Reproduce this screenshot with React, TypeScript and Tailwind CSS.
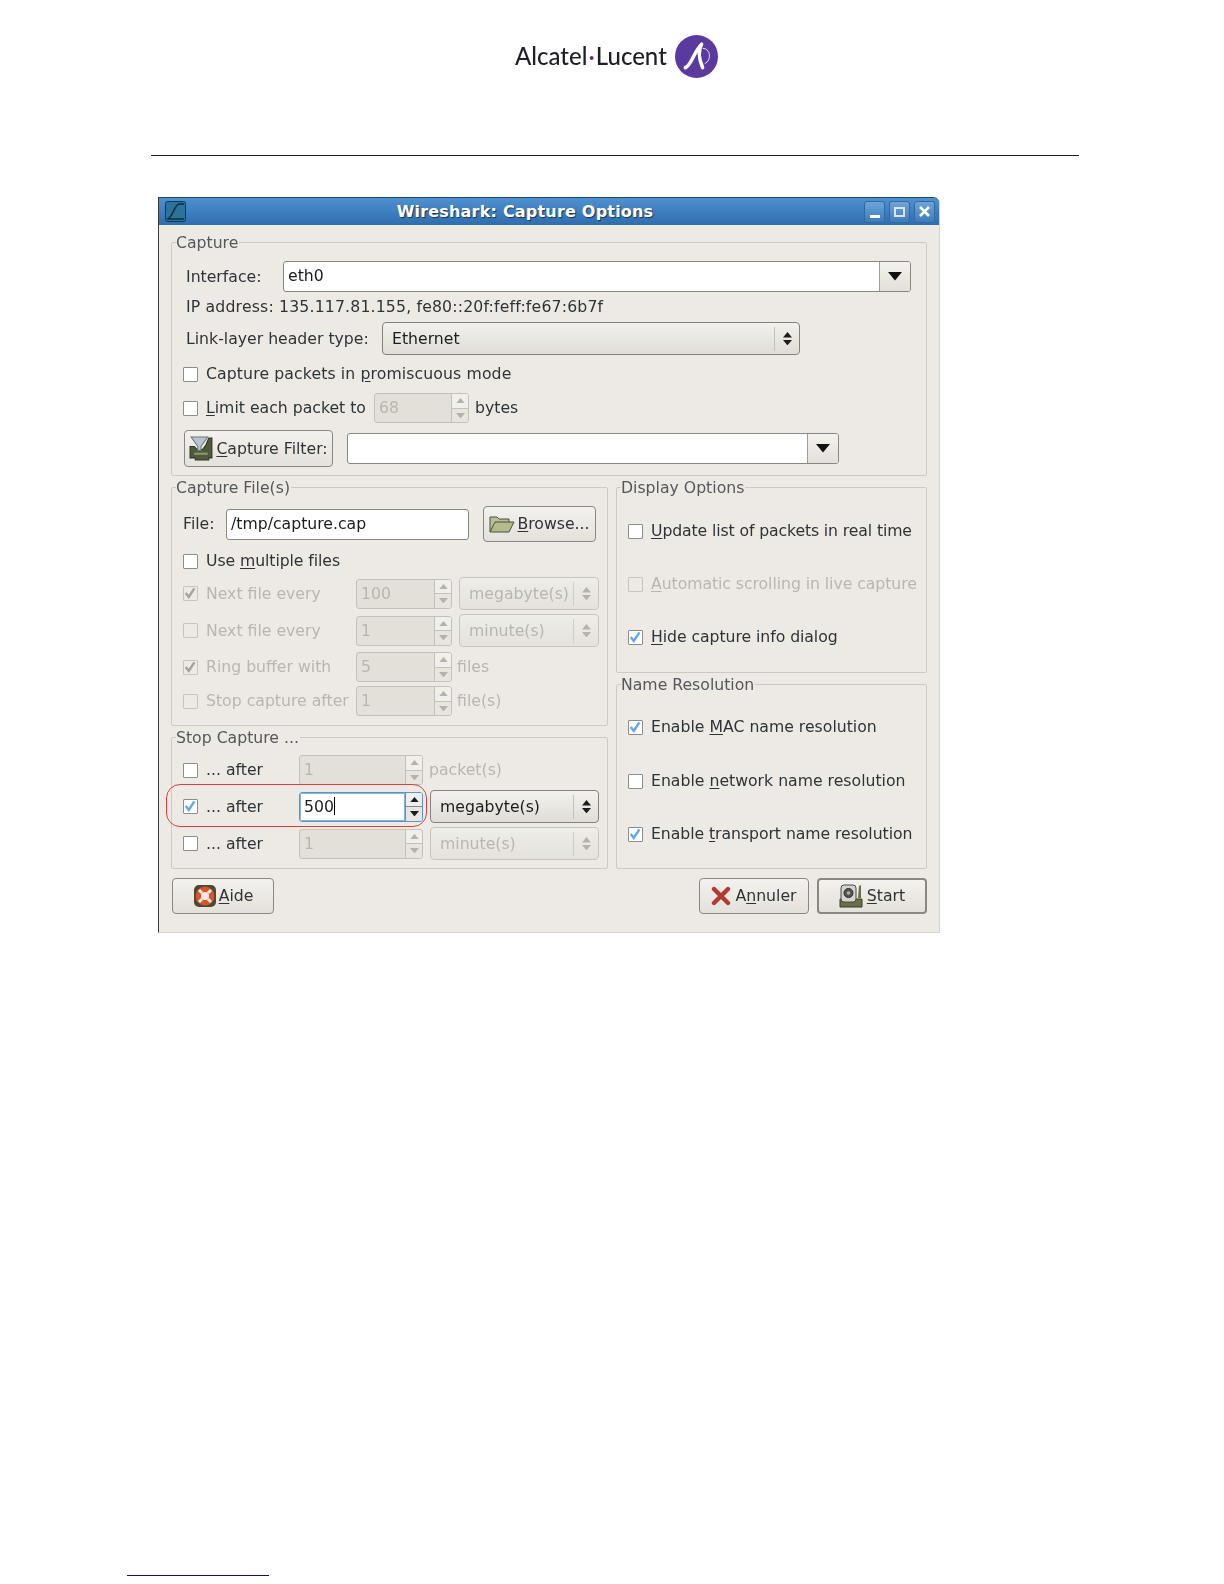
import type { ReactNode } from "react";

const ink = "text-[#2e3436]";
const off = "text-[#b9b6af]";

function Frame({ title, className, children }: { title: string; className: string; children: ReactNode }) {
  return (
    <fieldset className="border border-[#cdcac3] rounded-[2px]">
      <legend className="ml-[4px] pr-[1px] h-[20px] leading-[22px] text-[#55575a]">{title}</legend>
      <div className={className}>{children}</div>
    </fieldset>
  );
}

function Check({ on, disabled }: { on?: boolean; disabled?: boolean }) {
  const tone = disabled ? "border-[#c8c5be] bg-transparent" : "border-[#8f8d88] bg-white";
  return (
    <span className={`w-[15px] h-[15px] shrink-0 border rounded-[1px] ${tone}`}>
      {on && (
        <svg viewBox="0 0 15 15" className="w-[13px] h-[13px]">
          <path
            d="M2 7 L5.5 11.5 L12 1.5"
            fill="none"
            stroke={disabled ? "#a5a29b" : "#62a8e4"}
            strokeWidth="2.8"
          />
        </svg>
      )}
    </span>
  );
}

function CheckRow({ on, disabled, className, children }: { on?: boolean; disabled?: boolean; className: string; children: ReactNode }) {
  return (
    <div className={`flex items-center h-[20px] ${disabled ? off : ink} ${className}`}>
      <Check on={on} disabled={disabled} />
      <span className="ml-[8px] whitespace-nowrap">{children}</span>
    </div>
  );
}

function Arrow({ up, color, size = 10 }: { up?: boolean; color: string; size?: number }) {
  return (
    <svg width={size} height={size * 0.6} viewBox="0 0 10 6" className="block">
      <path d={up ? "M5 0 L10 6 L0 6 Z" : "M0 0 L10 0 L5 6 Z"} fill={color} />
    </svg>
  );
}

function Spin({ value, className, disabled, active }: { value: string; className: string; disabled?: boolean; active?: boolean }) {
  const arrow = disabled ? "#b5b2ab" : "#1c1c1c";
  return (
    <div
      className={`flex h-[30px] shrink-0 rounded-[3px] border overflow-hidden ${
        disabled ? "border-[#c4c1ba] bg-[#e3e0da]" : "border-[#5f93c7] bg-white"
      } ${className}`}
    >
      <span className={`flex-1 pl-[4px] leading-[28px] ${disabled ? off : "text-[#1c1c1c]"} ${active ? "outline outline-[#86b4e0] -outline-offset-1" : ""}`}>
        {value}
        {active && <span className="inline-block w-px h-[18px] bg-black align-[-3px]" />}
      </span>
      <span className={`w-[17px] flex flex-col border-l ${disabled ? "border-[#c4c1ba]" : "border-[#8a8780]"}`}>
        <span className="flex-1 flex items-center justify-center bg-[#f1efeb]"><Arrow up color={arrow} size={9} /></span>
        <span className={`flex-1 flex items-center justify-center border-t bg-[#e8e5df] ${disabled ? "border-[#c4c1ba]" : "border-[#8a8780]"}`}><Arrow color={arrow} size={9} /></span>
      </span>
    </div>
  );
}

function Combo({ value, className, disabled }: { value: string; className: string; disabled?: boolean }) {
  const arrow = disabled ? "#b5b2ab" : "#1c1c1c";
  return (
    <div
      className={`flex items-center h-[33px] shrink-0 rounded-[4px] border bg-gradient-to-b ${
        disabled ? "border-[#c8c5be] from-[#efede8] to-[#e5e2dc]" : "border-[#85827b] from-[#f3f1ed] to-[#e0ddd7]"
      } ${className}`}
    >
      <span className={`flex-1 pl-[9px] whitespace-nowrap ${disabled ? off : "text-[#1c1c1c]"}`}>{value}</span>
      <span className={`w-[25px] h-[24px] flex flex-col items-center justify-center gap-[2px] border-l ${disabled ? "border-[#cfccc5]" : "border-[#c4c1ba]"}`}>
        <Arrow up color={arrow} size={9} />
        <Arrow color={arrow} size={9} />
      </span>
    </div>
  );
}

function Entry({ value, className }: { value?: string; className: string }) {
  return (
    <div className={`flex h-[31px] shrink-0 rounded-[3px] border border-[#8a8780] bg-white overflow-hidden ${className}`}>
      <span className="flex-1 pl-[4px] leading-[28px] text-[#1c1c1c]">{value}</span>
      <span className="w-[31px] flex items-center justify-center border-l border-[#a09d96] bg-gradient-to-b from-[#f4f2ee] to-[#e3e0da]">
        <Arrow color="#111" size={14} />
      </span>
    </div>
  );
}

function Btn({ className, icon, children, isDefault }: { className: string; icon: ReactNode; children: ReactNode; isDefault?: boolean }) {
  return (
    <button
      className={`flex items-center justify-center h-[36px] shrink-0 rounded-[4px] bg-gradient-to-b from-[#f4f2ee] to-[#e4e1db] ${ink} ${
        isDefault ? "border-2 border-[#8a8780]" : "border border-[#8a8780]"
      } ${className}`}
    >
      {icon}
      <span className="ml-[2px] whitespace-nowrap">{children}</span>
    </button>
  );
}

function FilterIcon() {
  return (
    <svg width="25" height="25" viewBox="0 0 24 24">
      <path d="M1 10 H5 L8 13 H13 L16 9 L19 2 H22 V21 H19 V23 H6 V21 H1 Z" fill="#4f5a3d" stroke="#2f3526" />
      <path d="M2 1 H18 L11.5 10 V14 H8.5 V10 Z" fill="#b8c4cf" stroke="#6d7780" />
      <path d="M5 17 H18" stroke="#8d9a6c" strokeWidth="2" />
    </svg>
  );
}

function FolderIcon() {
  return (
    <svg width="26" height="20" viewBox="0 0 26 20">
      <path d="M1 18 V3 H8 L10 5 H20 V8" fill="#b9bf97" stroke="#4d4f3c" />
      <path d="M1 18 L6 8 H25 L20 18 Z" fill="#b4bb8d" stroke="#4d4f3c" />
    </svg>
  );
}

function BuoyIcon() {
  return (
    <svg width="24" height="24" viewBox="0 0 24 24">
      <rect x="1" y="1" width="22" height="22" rx="5" fill="#4a4a2e" />
      <circle cx="12" cy="12" r="9.5" fill="#d9532f" />
      <circle cx="12" cy="12" r="4" fill="#efece6" />
      <path d="M6 6 L9 9 M18 6 L15 9 M6 18 L9 15 M18 18 L15 15" stroke="#f6efe6" strokeWidth="3" />
    </svg>
  );
}

function CrossIcon() {
  return (
    <svg width="20" height="20" viewBox="0 0 20 20">
      <path d="M3 3 L17 17 M17 3 L3 17" stroke="#b23a33" strokeWidth="4.4" strokeLinecap="round" />
    </svg>
  );
}

function StartIcon() {
  return (
    <svg width="26" height="26" viewBox="0 0 26 26">
      <path d="M1 16 H23 V24 H1 Z" fill="#6a6f4a" stroke="#3a3d28" />
      <rect x="2" y="2" width="15" height="17" rx="3" fill="#d5d3cd" stroke="#4a4a44" />
      <circle cx="9.5" cy="10" r="4.5" fill="#54544e" stroke="#2b2b28" />
      <circle cx="9.5" cy="10" r="1.8" fill="#b0b0aa" />
      <path d="M20 3 L22 2 V15 H19 Z" fill="#6a6f4a" />
    </svg>
  );
}

function AppIcon() {
  return (
    <svg width="21" height="21" viewBox="0 0 21 21">
      <rect x="0.5" y="0.5" width="20" height="20" rx="2" fill="#2b7398" stroke="#123a55" />
      <path d="M2 18 C8 17 9 4 14 3 H19 M2 18 H19" fill="none" stroke="#0f2c42" strokeWidth="1.6" />
    </svg>
  );
}

function WinBtn({ children }: { children: ReactNode }) {
  return (
    <span className="w-[21px] h-[22px] flex items-center justify-center rounded-[3px] border border-[#2f6aa3] bg-gradient-to-b from-[#6fa5d8] to-[#3d7cb9]">
      {children}
    </span>
  );
}

function Logo() {
  return (
    <div className="flex items-center pl-[515px] pt-[35px] h-[77px] blur-[0.4px]">
      <span className="font-['Lato',sans-serif] font-medium text-[24px] leading-none text-[#1f1f26] whitespace-nowrap">
        Alcatel<span className="mx-[1px] text-[#5b2e91]">·</span>Lucent
      </span>
      <svg width="43" height="43" viewBox="0 0 42 42" className="ml-[8px]">
        <circle cx="21" cy="21" r="21" fill="#5b3aa0" />
        <path d="M10 32 C16 30 19 15 26 9 C22 16 24 25 27 32" fill="none" stroke="#fff" strokeWidth="3.4" strokeLinecap="round" strokeLinejoin="round" />
        <path d="M27 13 C35 13 36 25 29 28" fill="none" stroke="#fff" strokeWidth="0.8" />
      </svg>
    </div>
  );
}

export default function App() {
  return (
    <div className="w-[1224px] h-[1584px] bg-white flex flex-col font-['DejaVu_Sans',sans-serif] text-[15.7px]">
      <Logo />
      <div className="mt-[78px] ml-[151px] w-[928px] h-px bg-[#1f1f1f]" />

      <div className="mt-[41px] ml-[158px] w-[782px] h-[736px] flex flex-col bg-[#edeae5] border-l border-l-[#3a3a3a] border-r border-r-[#d5d3ce] border-b border-b-[#d5d3ce] rounded-tr-[6px] blur-[0.4px]">
        <div className="h-[28px] shrink-0 flex items-center pl-[6px] pr-[4px] gap-[1px] rounded-tr-[6px] bg-gradient-to-b from-[#4f90d0] to-[#2f6eae] border-t border-t-[#23456a]">
          <AppIcon />
          <span className="flex-1 text-center font-bold text-[16px] text-white tracking-[0.2px] [text-shadow:1px_1px_1px_#1c3550]">
            Wireshark: Capture Options
          </span>
          <span className="flex gap-[4px]">
            <WinBtn><span className="w-[10px] h-[3px] mt-[10px] bg-white" /></WinBtn>
            <WinBtn><span className="w-[11px] h-[10px] border-2 border-[#d9e6f2]" /></WinBtn>
            <WinBtn>
              <svg width="13" height="13" viewBox="0 0 13 13">
                <path d="M2 2 L11 11 M11 2 L2 11" stroke="#fff" strokeWidth="2.6" />
              </svg>
            </WinBtn>
          </span>
        </div>

        <div className="pt-[7px] pl-[12px] pr-[12px] flex flex-col">
          <Frame title="Capture" className="pl-[14px] pb-[8px]">
            <div className="mt-[9px] flex items-center">
              <span className={`w-[97px] ${ink}`}>Interface:</span>
              <Entry value="eth0" className="w-[628px]" />
            </div>
            <div className={`mt-[5px] h-[20px] leading-[20px] tracking-[0.17px] ${ink}`}>IP address: 135.117.81.155, fe80::20f:feff:fe67:6b7f</div>
            <div className="mt-[5px] flex items-center">
              <span className={`w-[196px] whitespace-nowrap ${ink}`}>Link-layer header type:</span>
              <Combo value="Ethernet" className="w-[418px]" />
            </div>
            <CheckRow className="mt-[9px] -ml-[3px] tracking-[0.11px]">
              Capture packets in <u className="underline-offset-2">p</u>romiscuous mode
            </CheckRow>
            <div className="mt-[9px] -ml-[3px] flex items-center h-[30px]">
              <CheckRow className="w-[191px]">
                <u className="underline-offset-2">L</u>imit each packet to
              </CheckRow>
              <Spin value="68" disabled className="w-[95px]" />
              <span className={`ml-[6px] ${ink}`}>bytes</span>
            </div>
            <div className="mt-[7px] -ml-[2px] flex items-center">
              <Btn className="w-[149px] h-[37px]" icon={<FilterIcon />}>
                <u className="underline-offset-2">C</u>apture Filter:
              </Btn>
              <Entry className="ml-[14px] w-[492px]" />
            </div>
          </Frame>

          <div className="mt-px grid grid-cols-[437px_311px] gap-x-[8px]">
            <div className="flex flex-col">
              <Frame title="Capture File(s)" className="pl-[11px] pb-[9px]">
                <div className="mt-[9px] flex items-center">
                  <span className={`w-[43px] ${ink}`}>File:</span>
                  <div className="w-[243px] h-[31px] rounded-[3px] border border-[#8a8780] bg-white pl-[4px] leading-[28px] text-[#1c1c1c]">/tmp/capture.cap</div>
                  <Btn className="ml-[14px] w-[113px]" icon={<FolderIcon />}>
                    <u className="underline-offset-2">B</u>rowse...
                  </Btn>
                </div>
                <CheckRow className="mt-[9px] tracking-[-0.08px]">
                  Use <u className="underline-offset-2">m</u>ultiple files
                </CheckRow>
                <div className="mt-[6px] flex items-center">
                  <CheckRow on disabled className="w-[173px]">Next file every</CheckRow>
                  <Spin value="100" disabled className="w-[96px]" />
                  <Combo value="megabyte(s)" disabled className="ml-[7px] w-[140px]" />
                </div>
                <div className="mt-[4px] flex items-center">
                  <CheckRow disabled className="w-[173px]">Next file every</CheckRow>
                  <Spin value="1" disabled className="w-[96px]" />
                  <Combo value="minute(s)" disabled className="ml-[7px] w-[140px]" />
                </div>
                <div className="mt-[5px] flex items-center">
                  <CheckRow on disabled className="w-[173px]">Ring buffer with</CheckRow>
                  <Spin value="5" disabled className="w-[96px]" />
                  <span className={`ml-[5px] ${off}`}>files</span>
                </div>
                <div className="mt-[4px] flex items-center">
                  <CheckRow disabled className="w-[173px]">Stop capture after</CheckRow>
                  <Spin value="1" disabled className="w-[96px]" />
                  <span className={`ml-[5px] ${off}`}>file(s)</span>
                </div>
              </Frame>

              <div className="mt-px">
                <Frame title="Stop Capture ..." className="pl-[11px] pb-[8px]">
                  <div className="mt-[8px] flex items-center">
                    <CheckRow className="w-[116px]">... after</CheckRow>
                    <Spin value="1" disabled className="w-[124px]" />
                    <span className={`ml-[6px] ${off}`}>packet(s)</span>
                  </div>
                  <div className="relative mt-[5px] flex items-center">
                    <CheckRow on className="w-[116px]">... after</CheckRow>
                    <Spin value="500" active className="w-[124px]" />
                    <Combo value="megabyte(s)" className="ml-[7px] w-[169px]" />
                    <span className="absolute -left-[17px] top-[-6px] w-[261px] h-[43px] rounded-[14px] border-[1.5px] border-[#d9403c]" />
                  </div>
                  <div className="mt-[4px] flex items-center">
                    <CheckRow className="w-[116px]">... after</CheckRow>
                    <Spin value="1" disabled className="w-[124px]" />
                    <Combo value="minute(s)" disabled className="ml-[7px] w-[169px]" />
                  </div>
                </Frame>
              </div>
            </div>

            <div className="flex flex-col">
              <Frame title="Display Options" className="pl-[11px] pb-[25px]">
                <CheckRow className="mt-[24px] tracking-[-0.12px]">
                  <u className="underline-offset-2">U</u>pdate list of packets in real time
                </CheckRow>
                <CheckRow disabled className="mt-[33px] tracking-[-0.06px]">
                  <u className="underline-offset-2">A</u>utomatic scrolling in live capture
                </CheckRow>
                <CheckRow on className="mt-[33px] tracking-[-0.06px]">
                  <u className="underline-offset-2">H</u>ide capture info dialog
                </CheckRow>
              </Frame>
              <div className="mt-px">
                <Frame title="Name Resolution" className="pl-[11px] pb-[24px]">
                  <CheckRow on className="mt-[23px]">
                    Enable <u className="underline-offset-2">M</u>AC name resolution
                  </CheckRow>
                  <CheckRow className="mt-[34px]">
                    Enable <u className="underline-offset-2">n</u>etwork name resolution
                  </CheckRow>
                  <CheckRow on className="mt-[33px] tracking-[-0.06px]">
                    Enable <u className="underline-offset-2">t</u>ransport name resolution
                  </CheckRow>
                </Frame>
              </div>
            </div>
          </div>

          <div className="mt-[9px] flex items-center pl-px">
            <Btn className="w-[102px]" icon={<BuoyIcon />}>
              <u className="underline-offset-2">A</u>ide
            </Btn>
            <Btn className="ml-auto w-[110px]" icon={<CrossIcon />}>
              <span className="ml-[2px]">A<u className="underline-offset-2">n</u>nuler</span>
            </Btn>
            <Btn isDefault className="ml-[8px] w-[110px]" icon={<StartIcon />}>
              <u className="underline-offset-2">S</u>tart
            </Btn>
          </div>
        </div>
      </div>

      <div className="mt-auto mb-[8px] ml-[127px] w-[142px] h-px bg-[#1a0f80]" />
    </div>
  );
}
